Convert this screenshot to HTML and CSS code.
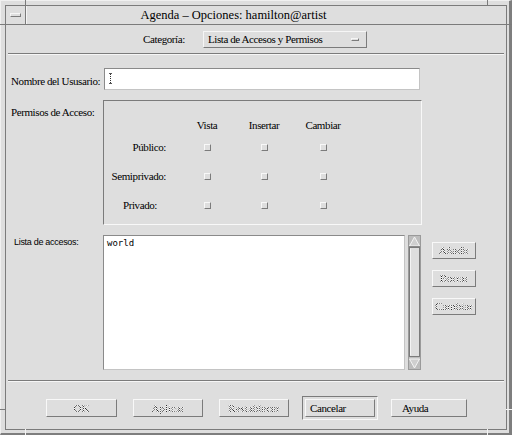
FILE: index.html
```html
<!DOCTYPE html>
<html>
<head>
<meta charset="utf-8">
<link rel="stylesheet" href="styles.css">
</head>
<body>
<div class="window">
  <div class="frame">
    <div class="titlebar">
      <div class="menubtn"><span class="menuicon"></span></div>
      <div class="title">Agenda – Opciones: hamilton@artist</div>
    </div>
    <div class="client">
      <div class="catrow">
        <span class="catlabel">Categoría:</span>
        <div class="optmenu"><span>Lista de Accesos y Permisos</span><span class="optind"></span></div>
      </div>
      <div class="sep"></div>
      <div class="form">
        <div class="lbl lbl-name">Nombre del Ususario:</div>
        <div class="textfield"><span class="caret"></span></div>

        <div class="lbl lbl-perm">Permisos de Acceso:</div>
        <div class="permframe">
          <span></span><span class="colh">Vista</span><span class="colh">Insertar</span><span class="colh">Cambiar</span>
          <span class="rowh">Público:</span><span class="cb"></span><span class="cb"></span><span class="cb"></span>
          <span class="rowh">Semiprivado:</span><span class="cb"></span><span class="cb"></span><span class="cb"></span>
          <span class="rowh rowh-priv">Privado:</span><span class="cb"></span><span class="cb"></span><span class="cb"></span>
        </div>

        <div class="lbl lbl-list">Lista de accesos:</div>
        <div class="listrow">
          <div class="listbox">world</div>
          <svg class="scroll" width="13" height="135" viewBox="0 0 13 135">
            <rect x="0.5" y="0.5" width="12" height="134" fill="#bdbdbd" stroke="#9a9a9a"/>
            <polygon points="6.5,2 1.5,11 11.5,11" fill="#cfcfcf" stroke="#f4f4f4"/>
            <line x1="1" y1="11.5" x2="12" y2="11.5" stroke="#8a8a8a"/>
            <rect x="1.5" y="12.5" width="10" height="109" fill="#dedede" stroke="#7b7b7b"/>
            <line x1="2.5" y1="13.5" x2="2.5" y2="120.5" stroke="#f4f4f4"/>
            <polygon points="1.5,124 11.5,124 6.5,133" fill="#cfcfcf" stroke="#f4f4f4"/>
          </svg>
          <div class="sidebtns">
            <div class="sbtn"><span class="dis">Añadir</span></div>
            <div class="sbtn"><span class="dis">Borrar</span></div>
            <div class="sbtn"><span class="dis">Cambiar</span></div>
          </div>
        </div>
      </div>
      <div class="sep"></div>
      <div class="btnrow">
        <div class="btn btn-ok"><span class="dis">OK</span></div>
        <div class="btn btn-apl"><span class="dis">Aplicar</span></div>
        <div class="btn"><span class="dis">Restablecer</span></div>
        <div class="ring"><div class="btn btn-cancel">Cancelar</div></div>
        <div class="btn btn-help">Ayuda</div>
      </div>
    </div>
  </div>
  <span class="tick tv dark t-tl"></span>
  <span class="tick tv dark t-tr"></span>
  <span class="tick th dark t-lt"></span>
  <span class="tick th dark t-rt"></span>
  <span class="tick th dark t-lb"></span>
  <span class="tick th light t-rb"></span>
  <span class="tick tv light t-bl"></span>
  <span class="tick tv light t-br"></span>
</div>
</body>
</html>
```

FILE: styles.css
```css
* { box-sizing: border-box; }
html, body { margin: 0; padding: 0; }
body {
  width: 512px;
  height: 435px;
  overflow: hidden;
  background: #dedede;
  color: #000;
  font-family: "Liberation Serif", "Times New Roman", serif;
  font-size: 11px;
  letter-spacing: -0.4px;
  line-height: 13px;
}
.window {
  position: relative;
  width: 512px;
  height: 435px;
  background: #dedede;
  border-style: solid;
  border-width: 1px 3px 2px 1px;
  border-color: #f0f0f0 #7e7e7e #7e7e7e #f0f0f0;
  padding: 4px 2px 3px 4px;
}
.frame {
  height: 100%;
  border: 1px solid #7b7b7b;
  display: flex;
  flex-direction: column;
}
.titlebar {
  flex: none;
  height: 19px;
  border-bottom: 1px solid #7b7b7b;
  display: flex;
}
.menubtn {
  width: 20px;
  border-right: 1px solid #7b7b7b;
  display: flex;
  align-items: center;
  justify-content: center;
  padding-right: 1px;
}
.menuicon {
  width: 11px;
  height: 4px;
  border: 1px solid;
  border-color: #f6f6f6 #7b7b7b #7b7b7b #f6f6f6;
}
.title {
  flex: 1;
  text-align: center;
  padding-right: 66px;
  font-size: 12.5px;
  letter-spacing: 0;
  line-height: 18px;
  white-space: nowrap;
  border-left: 1px solid #f4f4f4;
}
.client {
  flex: 1;
  display: flex;
  flex-direction: column;
}
.catrow {
  flex: none;
  height: 28px;
  display: flex;
  align-items: center;
  justify-content: center;
  gap: 18px;
  padding-right: 2px;
}
.optmenu {
  width: 164px;
  height: 17px;
  border: 1px solid;
  border-color: #f6f6f6 #7b7b7b #7b7b7b #f6f6f6;
  display: flex;
  align-items: center;
  justify-content: space-between;
  padding: 0 7px 0 4px;
  white-space: nowrap;
}
.optind {
  width: 8px;
  height: 3px;
  border: 1px solid;
  border-color: #f6f6f6 #7b7b7b #7b7b7b #f6f6f6;
}
.sep {
  flex: none;
  height: 2px;
  margin: 0 2px;
  border-top: 1px solid #7b7b7b;
  border-bottom: 1px solid #f6f6f6;
}
.form {
  flex: none;
  display: grid;
  grid-template-columns: 92px 1fr;
  grid-template-rows: 22px 125px 135px;
  row-gap: 10px;
  padding: 13px 0 10px 5px;
}
.lbl { white-space: nowrap; }
.lbl-name { align-self: center; padding-top: 5px; }
.lbl-perm { padding-top: 6px; }
.lbl-list {
  padding: 1px 0 0 3px;
  font-family: "Liberation Sans", Arial, sans-serif;
  font-size: 9px;
  letter-spacing: -0.3px;
  line-height: 12px;
}
.textfield {
  margin-left: 1px;
  width: 316px;
  height: 22px;
  background: #fff;
  border: 1px solid;
  border-color: #8a8a8a #c4c4c4 #c4c4c4 #8a8a8a;
  padding: 4px 0 0 4px;
}
.caret {
  display: block;
  width: 3px;
  height: 11px;
  border-top: 1px solid #555;
  border-bottom: 1px solid #555;
  background: repeating-linear-gradient(to bottom, #333 0 1px, transparent 1px 2px) center / 1px 100% no-repeat;
}
.permframe {
  width: 319px;
  border: 1px solid;
  border-color: #7b7b7b #f8f8f8 #f8f8f8 #7b7b7b;
  padding: 16px 0 4px 0;
  display: grid;
  grid-template-columns: 74px 58px 56px 62px;
  grid-template-rows: 16px 29px 29px 29px;
  align-items: center;
  white-space: nowrap;
}
.colh { text-align: center; }
.rowh { text-align: right; padding-right: 12px; }
.rowh-priv { padding-right: 21px; }
.cb {
  justify-self: center;
  width: 7px;
  height: 7px;
  border: 1px solid;
  border-color: #f8f8f8 #7b7b7b #7b7b7b #f8f8f8;
}
.listrow {
  display: flex;
  align-items: flex-start;
}
.listbox {
  flex: none;
  width: 302px;
  height: 135px;
  background: #fff;
  border: 1px solid;
  border-color: #8a8a8a #c4c4c4 #c4c4c4 #8a8a8a;
  padding: 1px 3px;
  font-family: "DejaVu Sans Mono", "Liberation Mono", monospace;
  font-size: 9px;
  letter-spacing: 0;
  line-height: 12px;
}
.scroll {
  flex: none;
  display: block;
  margin-left: 3px;
}
.sidebtns {
  margin-left: 11px;
  padding-top: 7px;
  display: flex;
  flex-direction: column;
  gap: 11px;
}
.sbtn {
  width: 44px;
  height: 17px;
  border: 1px solid;
  border-color: #f8f8f8 #7b7b7b #7b7b7b #f8f8f8;
  display: flex;
  align-items: center;
  justify-content: center;
  white-space: nowrap;
}
.dis {
  color: transparent;
  letter-spacing: 0;
  background: repeating-conic-gradient(#1e1e1e 0 25%, #ffffff 0 50%) 0 0 / 2px 2px;
  -webkit-background-clip: text;
  background-clip: text;
}
.btnrow {
  flex: 1;
  display: flex;
  align-items: flex-start;
  gap: 13px;
  padding: 14px 0 0 40px;
}
.btn {
  width: 70px;
  height: 18px;
  border: 1px solid;
  border-color: #f8f8f8 #7b7b7b #7b7b7b #f8f8f8;
  display: flex;
  align-items: center;
  justify-content: center;
  white-space: nowrap;
}
.btnrow > .btn { margin-top: 3px; }
.btn-ok { width: 71px; margin-right: 3px; }
.btn-apl { margin-right: 3px; }
.ring {
  width: 76px;
  height: 24px;
  border: 1px solid;
  border-color: #7b7b7b #f8f8f8 #f8f8f8 #7b7b7b;
  padding: 2px;
}
.btn-cancel { justify-content: flex-start; padding-left: 4px; }
.btnrow > .btn-help { width: 76px; justify-content: flex-start; padding-left: 10px; }
.tick { position: absolute; display: block; }
.tv { width: 1px; height: 5px; }
.th { width: 5px; height: 1px; }
.dark { background: #7b7b7b; }
.light { background: #f4f4f4; }
.t-tl { left: 24px; top: -1px; }
.t-tr { left: 486px; top: -1px; }
.t-lt { left: -1px; top: 23px; }
.t-rt { left: 505px; top: 23px; width: 6px; }
.t-lb { left: -1px; top: 408px; }
.t-rb { left: 505px; top: 408px; width: 6px; }
.t-bl { left: 24px; top: 428px; height: 6px; }
.t-br { left: 486px; top: 428px; height: 6px; }
```
